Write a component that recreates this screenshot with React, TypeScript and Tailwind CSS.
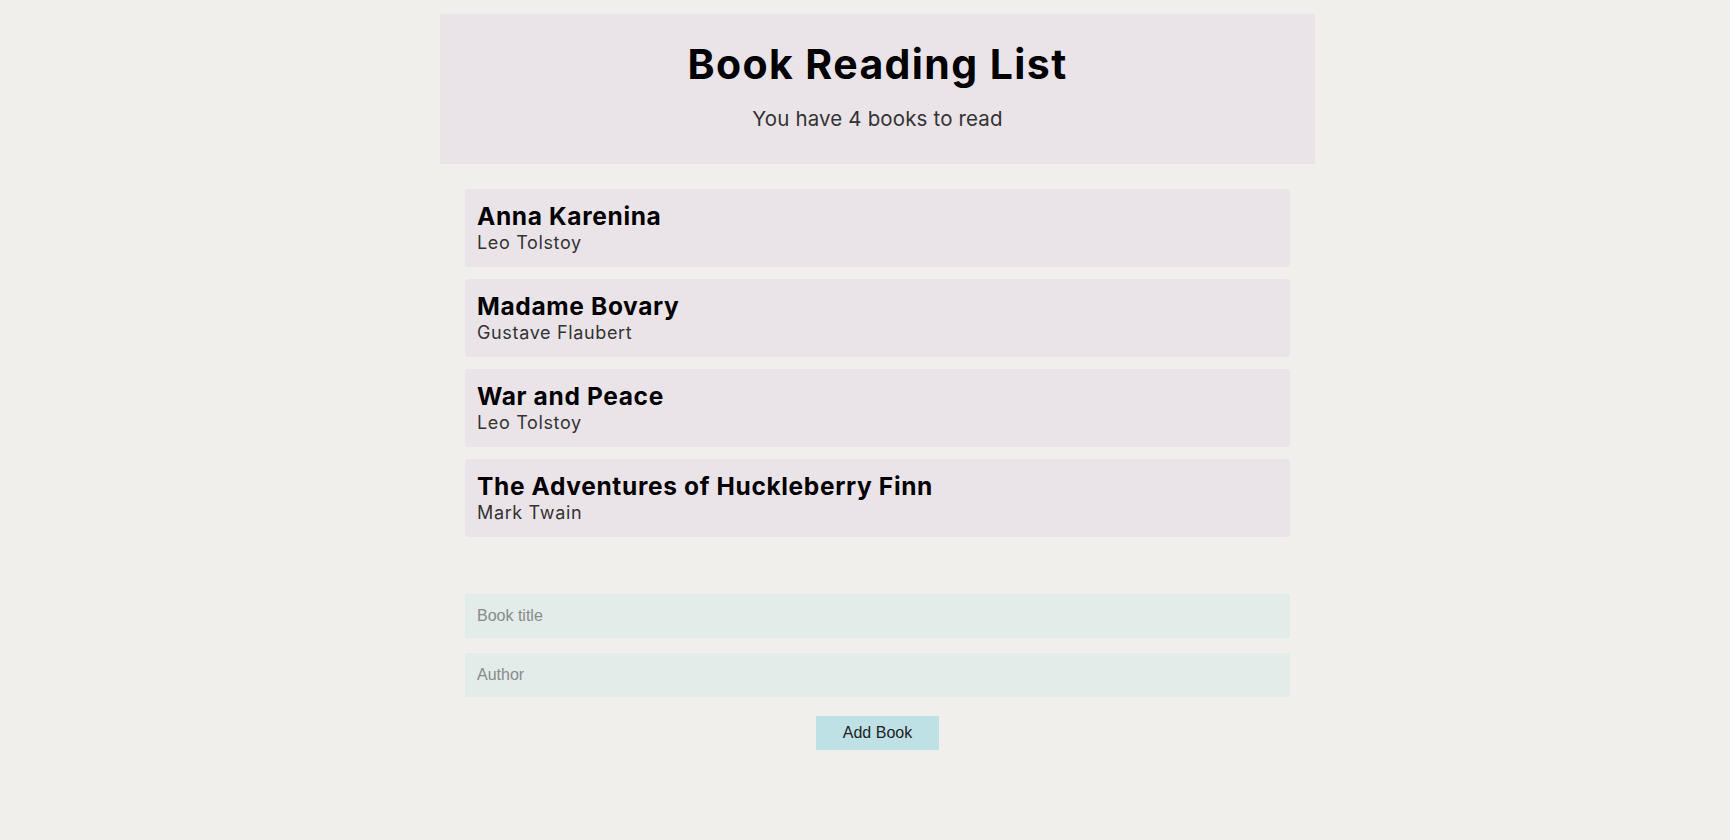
import React from "react";

const books = [
  { title: "Anna Karenina", author: "Leo Tolstoy" },
  { title: "Madame Bovary", author: "Gustave Flaubert" },
  { title: "War and Peace", author: "Leo Tolstoy" },
  { title: "The Adventures of Huckleberry Finn", author: "Mark Twain" },
];

export default function App() {
  return (
    <div className="min-h-[840px] bg-[#f0efeb] pl-[25px] pt-[14px] font-['Inter',sans-serif]">
      <div className="mx-auto w-[875px]">
        <header className="flex flex-col items-center bg-[#eae4e9] pt-[26px] pb-[33px]">
          <h1 className="text-[41px] leading-[48px] font-bold tracking-[1.4px] text-black">Book Reading List</h1>
          <p className="mt-[19px] text-[20.5px] leading-[24px] tracking-[0.15px] text-[#333]">You have {books.length} books to read</p>
        </header>
        <div className="mt-[25px] flex flex-col gap-[12px] px-[25px]">
          {books.map((b) => (
            <div key={b.title} className="flex h-[78px] flex-col rounded-[4px] bg-[#eae4e9] pl-3 pt-[13px]">
              <h2 className="text-[24.5px] leading-[28px] font-bold tracking-[0.65px] text-black">{b.title}</h2>
              <p className="mt-[2px] text-[18px] leading-[22px] tracking-[0.65px] text-[#333]">{b.author}</p>
            </div>
          ))}
        </div>
        <form className="mt-[57px] flex flex-col items-center px-[25px]" onSubmit={(e) => e.preventDefault()}>
          <input
            placeholder="Book title"
            className="h-[44px] w-full bg-[#e2ece9] pl-3 font-['Liberation_Sans',sans-serif] text-[16px] text-[#333] outline-none placeholder:text-[#8a8a8a]"
          />
          <input
            placeholder="Author"
            className="mt-[15px] h-[44px] w-full bg-[#e2ece9] pl-3 font-['Liberation_Sans',sans-serif] text-[16px] text-[#333] outline-none placeholder:text-[#8a8a8a]"
          />
          <button
            type="submit"
            className="mt-[19px] h-[34px] w-[123px] bg-[#bee1e6] font-['Liberation_Sans',sans-serif] text-[16px] text-[#222]"
          >
            Add Book
          </button>
        </form>
      </div>
    </div>
  );
}
